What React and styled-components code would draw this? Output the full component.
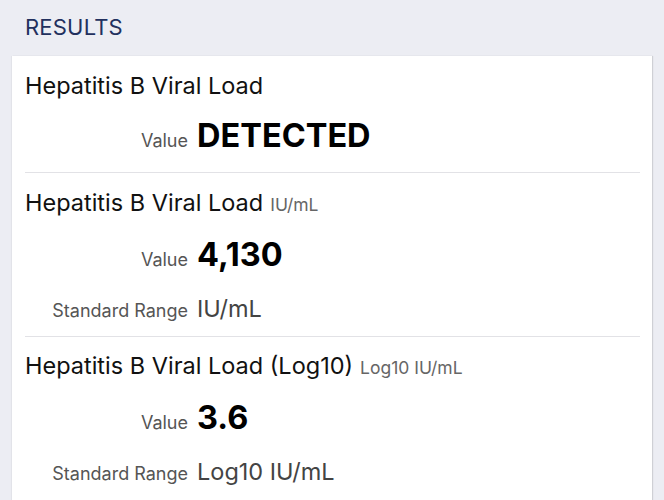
import React from "react";
import styled, { createGlobalStyle } from "styled-components";

const Global = createGlobalStyle`
  html, body { margin: 0; padding: 0; background: #ecedf3; }
  body { font-family: Inter, "Liberation Sans", sans-serif; -webkit-font-smoothing: antialiased; }
`;

const Page = styled.div`
  width: 664px;
  height: 500px;
  overflow: hidden;
  background: #ecedf3;
  padding: 0 12px 0 12px;
  box-sizing: border-box;
`;

const SectionHeader = styled.div`
  padding: 13px 0 0 13px;
  height: 56px;
  box-sizing: border-box;
  font-size: 22px;
  line-height: 28px;
  color: #22305e;
  letter-spacing: 0.2px;
`;

const Card = styled.div`
  background: #ffffff;
  width: 640px;
  padding-left: 13px;
  box-sizing: border-box;
  box-shadow: 1px 0 1px rgba(0, 0, 0, 0.12), -1px 0 1px rgba(0, 0, 0, 0.04);
`;

const Row = styled.div`
  margin-right: 12px;
  padding: ${(p) => p.$top}px 0 ${(p) => p.$bottom}px 0;
  border-bottom: ${(p) => (p.$last ? "none" : "1px solid #e2e2e6")};
`;

const Title = styled.div`
  font-size: 23.5px;
  line-height: 28px;
  color: #111;
`;

const Unit = styled.span`
  font-size: 17.5px;
  color: #666;
  margin-left: 7px;
`;

const Grid = styled.div`
  display: grid;
  grid-template-columns: 163px auto;
  column-gap: 9px;
  align-items: baseline;
  margin-top: 8px;
`;

const Label = styled.div`
  text-align: right;
  font-size: 18px;
  color: #555;
  line-height: ${(p) => p.$lh}px;
`;

const BigValue = styled.div`
  font-size: 32.5px;
  font-weight: 700;
  color: #000;
  line-height: ${(p) => p.$lh}px;
`;

const RangeValue = styled.div`
  font-size: 23.5px;
  color: #444;
  line-height: ${(p) => p.$lh}px;
`;

const results = [
  { title: "Hepatitis B Viral Load", value: "DETECTED", top: 16, bottom: 3 },
  { title: "Hepatitis B Viral Load", unit: "IU/mL", value: "4,130", range: "IU/mL", top: 16, bottom: 4 },
  { title: "Hepatitis B Viral Load (Log10)", unit: "Log10 IU/mL", value: "3.6", range: "Log10 IU/mL", top: 15, bottom: 10, last: true },
];

export default function App() {
  return (
    <>
      <Global />
      <Page>
        <SectionHeader>RESULTS</SectionHeader>
        <Card>
          {results.map((r, i) => (
            <Row key={i} $top={r.top} $bottom={r.bottom} $last={r.last}>
              <Title>
                {r.title}
                {r.unit && <Unit>{r.unit}</Unit>}
              </Title>
              <Grid>
                <Label $lh={56}>Value</Label>
                <BigValue $lh={56}>{r.value}</BigValue>
                {r.range && (
                  <>
                    <Label $lh={42}>Standard Range</Label>
                    <RangeValue $lh={42}>{r.range}</RangeValue>
                  </>
                )}
              </Grid>
            </Row>
          ))}
        </Card>
      </Page>
    </>
  );
}
